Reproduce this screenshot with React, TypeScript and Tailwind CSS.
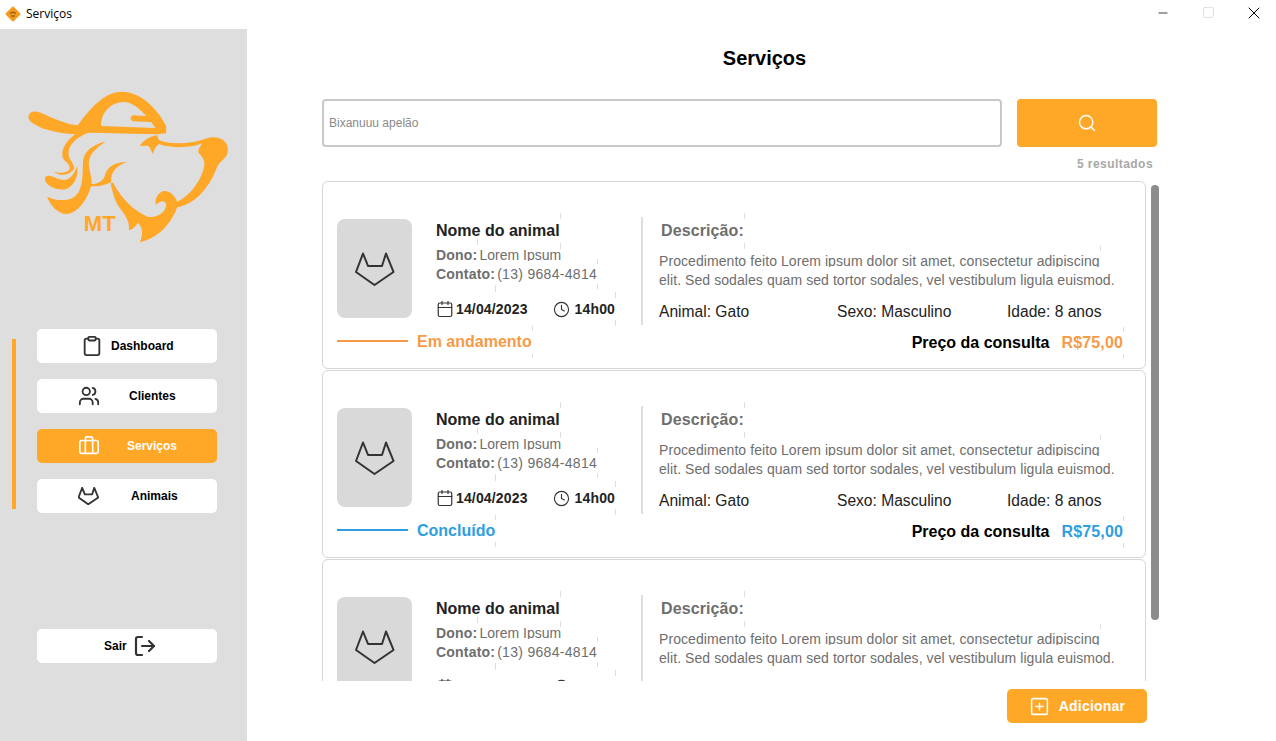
import { Briefcase, Calendar, Clipboard, Clock, LogOut, Minus, Search, Square, SquarePlus, Users, X } from "lucide-react";
import type { ReactNode } from "react";

function Fox({ size, stroke, color }: { size: number; stroke: number; color: string }) {
  return (
    <svg width={size} height={size * 0.86} viewBox="0 0 40 34.4" fill="none" stroke={color} strokeWidth={stroke} strokeLinejoin="round">
      <path d="M8 1.5 13 14h14l4-12.5 7.5 18.5-19 13-18.5-13z" />
    </svg>
  );
}

// stray little marks the app draws at the right edge of its labels
function Edge({ children, up = 7, down = 7 }: { children: ReactNode; up?: number; down?: number }) {
  return (
    <span className="relative inline-block">
      {children}
      <i className="absolute right-[-1px] w-px bg-[#dedede]" style={{ top: -up, height: up - 1 }} />
      <i className="absolute right-[-1px] w-px bg-[#dedede]" style={{ bottom: -down, height: down - 1 }} />
    </span>
  );
}

function Logo() {
  return (
    <svg width="202" height="154" viewBox="80 270 605 462" fill="#ffa726" fillRule="evenodd">
      <path d="M85 345C90 332 105 332 120 338C160 355 195 372 232 376C265 330 310 275 365 275C420 275 470 325 497 378L497 400L470 403L270 398L230 403C190 402 130 392 100 372C88 364 80 355 85 345ZM302 378C300 340 330 306 370 306C395 306 420 328 437 348L398 346C388 348 388 362 398 364L452 366L465 384Z" />
      <path d="M262 398L228 400C200 420 182 445 186 470C190 485 208 488 208 505C205 518 180 522 160 515C175 528 205 530 222 505C215 480 200 475 205 450C212 425 235 410 262 398Z" />
      <path d="M135 530C150 520 170 540 190 540C210 540 222 520 230 498C235 530 220 560 195 568C170 572 125 555 135 530Z" />
      <path d="M140 590C165 602 215 610 235 575C250 545 245 510 248 480C252 450 285 430 315 425C285 445 262 465 265 495C268 520 275 535 273 552C290 552 305 545 312 530C318 500 345 485 380 486C350 495 330 515 332 545C325 552 290 562 272 558C262 590 245 625 210 640C180 650 150 620 140 590Z" />
      <path d="M418 436C428 425 438 412 470 405L475 420C510 435 570 432 615 416C645 405 682 415 682 450C682 475 660 480 650 500C630 555 590 610 530 622C520 650 490 710 418 727C430 700 425 680 412 668C405 680 395 690 385 690C390 665 370 640 355 620C340 595 335 570 330 548L338 548C365 600 400 630 440 650C465 655 495 640 497 615C495 600 480 600 466 615C462 600 470 578 490 573C510 572 525 590 530 605C570 590 610 530 612 490C610 475 600 465 595 460C590 450 600 440 605 430C570 445 510 445 475 432C465 440 460 450 458 462C452 455 450 445 445 438C435 436 425 440 418 436Z" />
      <text x="250" y="692" fontSize="66" fontWeight="700" fontFamily="'Liberation Sans', sans-serif">MT</text>
    </svg>
  );
}

function NavItem({ icon, label, active, iconBox, gap }: { icon: ReactNode; label: string; active?: boolean; iconBox: string; gap: string }) {
  return (
    <div className={`flex h-[34px] w-[180px] items-center rounded-[5px] text-xs font-bold ${active ? "bg-[#ffa726] text-white" : "bg-white text-black"}`}>
      <span className={`flex justify-center ${iconBox}`}>{icon}</span>
      <span className={gap}>{label}</span>
    </div>
  );
}

function ServiceCard({ status, color }: { status: string; color: string }) {
  const textColor = color === "orange" ? "text-[#f79a47]" : "text-[#2f9ee0]";
  const lineColor = color === "orange" ? "bg-[#f79a47]" : "bg-[#2f9ee0]";
  return (
    <div className="h-[188px] w-[824px] shrink-0 rounded-md border border-[#d6d6d6] bg-white pt-[35px]">
      <div className="flex h-[108px]">
        <div className="flex w-[318px] shrink-0 pl-[14px] pt-[2px]">
          <div className="flex h-[99px] w-[75px] items-center justify-center rounded-lg bg-[#d9d9d9] pt-[1px]">
            <Fox size={40} stroke={2} color="#333333" />
          </div>
          <div className="ml-[24px] flex flex-col">
            <div className="mt-[1px] h-[22px] text-base leading-[22px] font-bold text-[#222222]">
              <Edge>Nome do animal</Edge>
            </div>
            <div className="mt-[4px] flex h-[16px] text-sm leading-[18px] text-[#6e6e6e]">
              <Edge up={7} down={1}>
                <span className="block h-[16px] overflow-hidden font-bold tracking-[0.2px]">Dono:</span>
              </Edge>
              <span className="ml-[2px] block h-[15px] overflow-hidden">Lorem Ipsum</span>
            </div>
            <div className="mt-[3px] flex h-[19px] text-sm leading-[18px] text-[#6e6e6e]">
              <Edge up={1} down={8}>
                <span className="font-bold tracking-[0.2px]">Contato:</span>
              </Edge>
              <span className="ml-[2px] tracking-[0.3px]"><Edge up={6} down={6}>(13) 9684-4814</Edge></span>
            </div>
            <div className="mt-[15px] flex items-center text-sm font-bold tracking-[0.15px] text-[#222222]">
              <Calendar size={18} strokeWidth={1.6} className="mr-[2px] text-[#333333]" />
              <span>14/04/2023</span>
              <Clock size={17} strokeWidth={1.6} className="ml-[25px] mr-[5px] text-[#333333]" />
              <Edge>14h00</Edge>
            </div>
          </div>
        </div>
        <div className="h-full w-[2px] shrink-0 bg-[#dedede]" />
        <div className="flex w-[480px] flex-col pl-[16px]">
          <div className="ml-[2px] h-[22px] pt-[3px] text-base leading-[22px] font-bold tracking-[0.1px] text-[#6e6e6e]">
            <Edge>Descrição:</Edge>
          </div>
          <div className="mt-[13px] h-[16px] text-sm leading-[18px] tracking-[0.07px] text-[#6e6e6e]">
            <Edge up={6} down={1}>
              <span className="block h-[15px] overflow-hidden">Procedimento feito Lorem ipsum dolor sit amet, consectetur adipiscing</span>
            </Edge>
          </div>
          <div className="mt-[3px] h-[18px] text-sm leading-[18px] tracking-[0.07px] text-[#6e6e6e]">
            elit. Sed sodales quam sed tortor sodales, vel vestibulum ligula euismod.
          </div>
          <div className="mt-[13px] flex text-[15.6px] leading-[20px] text-[#222222]">
            <span className="w-[178px]">Animal: Gato</span>
            <span className="w-[170px]">Sexo: Masculino</span>
            <span>Idade: 8 anos</span>
          </div>
        </div>
      </div>
      <div className="mt-[5px] flex items-start justify-between pl-[14px] pr-[22px]">
        <div className="flex h-[22px] items-center">
          <div className={`h-[2px] w-[71px] ${lineColor}`} />
          <span className={`ml-[9px] pt-[2px] text-base leading-[20px] font-bold ${textColor}`}>
            <Edge up={6} down={6}>{status}</Edge>
          </span>
        </div>
        <div className="flex pt-[3px] text-base leading-[20px] font-bold text-black">
          <span>Preço da consulta</span>
          <span className={`ml-[12px] tracking-[0.15px] ${textColor}`}><Edge up={6} down={6}>R$75,00</Edge></span>
        </div>
      </div>
    </div>
  );
}

export default function App() {
  return (
    <div className="flex h-[741px] w-[1276px] flex-col overflow-hidden bg-white font-['Liberation_Sans',sans-serif]">
      {/* title bar */}
      <div className="flex h-[29px] shrink-0 items-center pb-[2px] pl-[5px]">
        <svg width="16" height="16" viewBox="0 0 16 16">
          <rect x="2.4" y="2.4" width="11.2" height="11.2" rx="1" transform="rotate(45 8 8)" fill="#f39a1f" />
          <path d="M5 7.5 8 6l3 1.5M6 10h4" stroke="#6b4a12" strokeWidth="1" fill="none" />
        </svg>
        <span className="ml-[5px] font-['Open_Sans',sans-serif] text-xs text-black">Serviços</span>
        <div className="mb-[2px] ml-auto flex items-center">
          <Minus size={14} strokeWidth={1.3} className="text-black" />
          <Square size={13} strokeWidth={1} className="ml-[32px] text-[#c4c4c4]" />
          <X size={20} strokeWidth={1.2} className="ml-[29px] mr-[12px] text-black" />
        </div>
      </div>

      <div className="flex min-h-0 flex-1">
        {/* sidebar */}
        <aside className="flex w-[247px] shrink-0 flex-col bg-[#dedede] pt-[61px]">
          <div className="pl-[27px]">
            <Logo />
          </div>
          <div className="mt-[85px] flex">
            <div className="mt-[10px] ml-[12px] h-[170px] w-[4px] bg-[#ffa726]" />
            <div className="ml-[21px] flex flex-col gap-[16px]">
              <NavItem icon={<Clipboard size={22} strokeWidth={2} className="text-[#333333]" />} label="Dashboard" iconBox="ml-[43px] w-[24px]" gap="ml-[7px]" />
              <NavItem icon={<Users size={22} strokeWidth={2} className="text-[#333333]" />} label="Clientes" iconBox="ml-[40px] w-[24px]" gap="ml-[28px]" />
              <NavItem active icon={<Briefcase size={22} strokeWidth={1.75} className="text-white" />} label="Serviços" iconBox="ml-[41px] w-[22px]" gap="ml-[27px]" />
              <NavItem icon={<Fox size={21} stroke={3.5} color="#333333" />} label="Animais" iconBox="ml-[41px] w-[21px]" gap="ml-[32px]" />
            </div>
          </div>
          <div className="mt-[116px] ml-[37px] flex h-[34px] w-[180px] items-center rounded-[5px] bg-white pl-[67px] text-xs font-bold text-black">
            <span>Sair</span>
            <LogOut size={24} strokeWidth={2.2} className="ml-[6px] text-[#333333]" />
          </div>
        </aside>

        {/* main */}
        <main className="flex min-w-0 flex-1 flex-col pt-[15px] pl-[75px]">
          <h1 className="w-[885px] text-center text-xl font-bold text-black">Serviços</h1>
          <div className="mt-[27px] flex gap-[15px]">
            <input
              placeholder="Bixanuuu apelão"
              className="h-[48px] w-[680px] rounded-[4px] border-2 border-[#c8c8c8] px-[5px] text-xs outline-none placeholder:text-[#8a8a8a]"
            />
            <div className="flex h-[48px] w-[140px] items-center justify-center rounded-[4px] bg-[#ffa726]">
              <Search size={20} strokeWidth={1.75} className="text-white" />
            </div>
          </div>
          <div className="mt-[10px] w-[831px] text-right text-xs leading-[15px] font-bold tracking-[0.45px] text-[#a8a8a8]">5 resultados</div>
          <div className="mt-[9px] flex gap-[5px]">
            <div className="flex h-[500px] w-[824px] flex-col gap-px overflow-hidden">
              <ServiceCard status="Em andamento" color="orange" />
              <ServiceCard status="Concluído" color="blue" />
              <ServiceCard status="Concluído" color="blue" />
            </div>
            <div className="mt-[4px] h-[435px] w-[8px] rounded-full bg-[#8c8c8c]" />
          </div>
          <div className="mt-[8px] ml-[685px] flex h-[34px] w-[140px] items-center justify-center rounded-[5px] bg-[#ffa726] text-sm font-bold tracking-[0.2px] text-white">
            <SquarePlus size={21} strokeWidth={1.75} className="mr-[9px]" />
            <span>Adicionar</span>
          </div>
        </main>
      </div>
    </div>
  );
}
